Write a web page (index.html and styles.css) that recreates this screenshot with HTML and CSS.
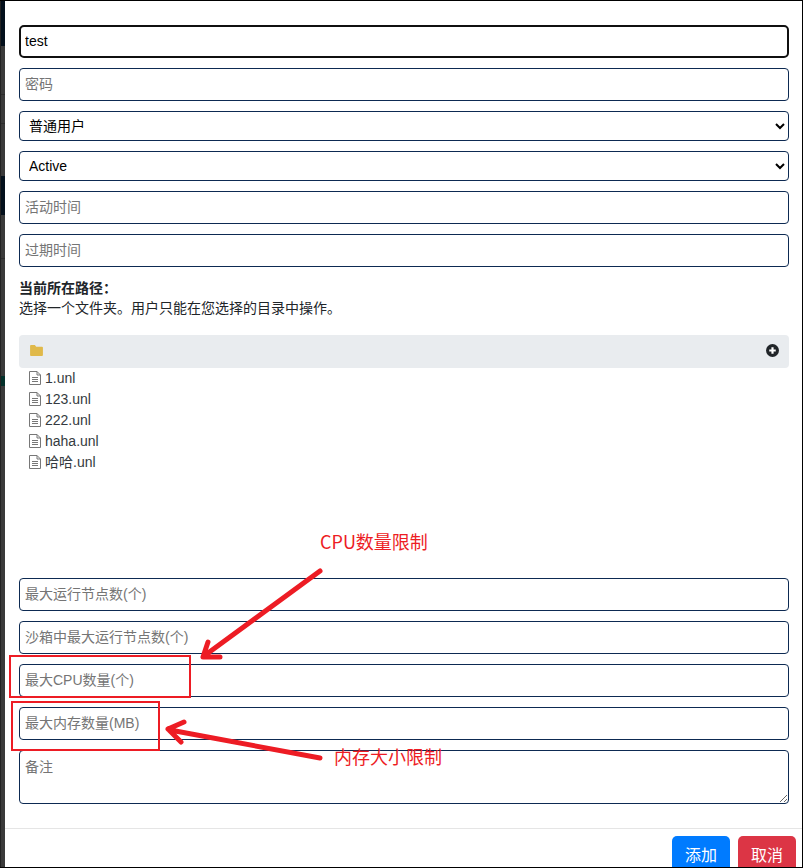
FILE: index.html
```html
<!DOCTYPE html>
<html lang="zh">
<head>
<meta charset="utf-8">
<title>用户</title>
<link rel="stylesheet" href="styles.css">
</head>
<body>
<div class="page">
  <div class="strip"></div>
  <div class="modal">
    <form class="form">
      <div class="group"><input class="field focus" type="text" value="test"></div>
      <div class="group"><input class="field" type="text" placeholder="密码"></div>
      <div class="group"><select class="field select"><option>普通用户</option></select></div>
      <div class="group"><select class="field select"><option>Active</option></select></div>
      <div class="group"><input class="field" type="text" placeholder="活动时间"></div>
      <div class="group"><input class="field" type="text" placeholder="过期时间"></div>
      <div class="path">
        <strong>当前所在路径：</strong>
        <div>选择一个文件夹。用户只能在您选择的目录中操作。</div>
      </div>
      <div class="tree-head">
        <svg class="folder" viewBox="0 0 14 12"><path d="M1 0h4.200l1.500 1.800H13a1 1 0 0 1 1 1V11a1 1 0 0 1-1 1H1a1 1 0 0 1-1-1V1a1 1 0 0 1 1-1z"/></svg>
        <svg class="plus" viewBox="0 0 12 12"><circle cx="6" cy="6" r="6"/><path d="M6 3v6M3 6h6"/></svg>
      </div>
      <ul class="files">
        <li><svg class="file" viewBox="0 0 12 14"><path d="M.5.5h7.500l3.500 3.500v9.500h-11zM8 .5v3.500h3.500M3 6.500h6M3 8.500h6M3 10.500h6"/></svg><span>1.unl</span></li>
        <li><svg class="file" viewBox="0 0 12 14"><path d="M.5.5h7.500l3.500 3.500v9.500h-11zM8 .5v3.500h3.500M3 6.500h6M3 8.500h6M3 10.500h6"/></svg><span>123.unl</span></li>
        <li><svg class="file" viewBox="0 0 12 14"><path d="M.5.5h7.500l3.500 3.500v9.500h-11zM8 .5v3.500h3.500M3 6.500h6M3 8.500h6M3 10.500h6"/></svg><span>222.unl</span></li>
        <li><svg class="file" viewBox="0 0 12 14"><path d="M.5.5h7.500l3.500 3.500v9.500h-11zM8 .5v3.500h3.500M3 6.500h6M3 8.500h6M3 10.500h6"/></svg><span>haha.unl</span></li>
        <li><svg class="file" viewBox="0 0 12 14"><path d="M.5.5h7.500l3.500 3.500v9.500h-11zM8 .5v3.500h3.500M3 6.500h6M3 8.500h6M3 10.500h6"/></svg><span>哈哈.unl</span></li>
      </ul>
      <div class="group"><input class="field" type="text" placeholder="最大运行节点数(个)"></div>
      <div class="group"><input class="field" type="text" placeholder="沙箱中最大运行节点数(个)"></div>
      <div class="group"><input class="field" type="text" placeholder="最大CPU数量(个)"></div>
      <div class="group"><input class="field" type="text" placeholder="最大内存数量(MB)"></div>
      <div class="group"><textarea class="field area" placeholder="备注"></textarea></div>
    </form>
    <div class="footer">
      <button class="btn add" type="button">添加</button>
      <button class="btn cancel" type="button">取消</button>
    </div>
  </div>
  <div class="note note-cpu">CPU数量限制</div>
  <div class="note note-mem">内存大小限制</div>
  <div class="box box-cpu"></div>
  <div class="box box-mem"></div>
  <svg class="arrows" viewBox="0 0 803 868">
    <path d="M320 571 L204 656 M203 657 L208 642 M203 657 L220 657"/>
    <path d="M320 758 L170 730 M168 729 L184 722 M168 729 L181 742"/>
  </svg>
</div>
</body>
</html>
```
FILE: styles.css
```css
* { box-sizing: border-box; }
html, body { margin: 0; padding: 0; height: 100%; }
body { font-family: "Liberation Sans", "Noto Sans CJK SC", sans-serif; background: #000; overflow: hidden; }
.page { position: relative; display: flex; width: 803px; height: 868px; padding: 1px 1px 1px 0; overflow: hidden; }
.strip {
  width: 5px; flex: none; border-left: 1px solid #222;
  background: linear-gradient(#04101c 0 45px, #3a3a3a 45px 93px, #2c2c2c 93px 94px, #3a3a3a 94px 122px, #2c2c2c 122px 123px, #3a3a3a 123px 175px, #04101c 175px 214px, #3a3a3a 214px 257px, #2c2c2c 257px 258px, #3a3a3a 258px 375px, #03302a 375px 385px, #3a3a3a 385px);
}
.modal { flex: 1; min-width: 0; background: #fff; display: flex; flex-direction: column; color: #212529; }
.form { padding: 24px 13px 0 14px; height: 827px; flex: none; }
.group { margin-bottom: 10px; }
.field { display: block; width: 100%; height: 33px; border: 1px solid #0d2a52; border-radius: 4px; background: #fff; padding: 0 5px 2px; font: 14px "Liberation Sans", "Noto Sans CJK SC", sans-serif; color: #000; outline: none; }
.field::placeholder { color: #757575; opacity: 1; }
.focus { border: 2px solid #101010; border-radius: 5px; padding: 0 4px 2px; }
.select { height: 30px; padding: 0 0 0 5px; }
.area { height: 54px; padding-top: 5px; resize: vertical; }
.path { font-size: 14px; line-height: 20px; color: #212529; margin-top: 11px; height: 57px; }
.path strong { display: block; font-weight: 700; }
.tree-head { display: flex; align-items: center; justify-content: space-between; height: 33px; background: #e9ecef; border-radius: 4px; padding: 0 10px 2px 11px; }
.folder { width: 13px; height: 11px; fill: #e0b94a; }
.plus { width: 13px; height: 13px; }
.plus circle { fill: #212529; }
.plus path { stroke: #fff; stroke-width: 2; fill: none; }
.files { list-style: none; margin: 0; padding: 0 0 0 10px; height: 210px; font-size: 14px; color: #343a40; }
.files li { display: flex; align-items: center; gap: 4px; height: 21px; padding-bottom: 2px; line-height: 16px; }
.file { width: 12px; height: 14px; fill: none; stroke: #777; stroke-width: 1; flex: none; }
.footer { flex: 1; border-top: 1px solid #e5e5e5; display: flex; justify-content: flex-end; gap: 8px; padding: 7px 6px 0 0; overflow: hidden; }
.btn { width: 58px; height: 40px; border: 0; border-radius: 5px; font: 16px "Liberation Sans", "Noto Sans CJK SC", sans-serif; color: #fff; padding: 0 0 4px; flex: none; }
.add { background: #007bff; }
.cancel { background: #dc3545; }
.note { position: absolute; color: #ed1c24; font: 18px/24px "Noto Sans CJK SC", sans-serif; }
.note-cpu { left: 320px; top: 529px; }
.note-mem { left: 334px; top: 744px; }
.box { position: absolute; border: 2px solid #ed1c24; }
.box-cpu { left: 9px; top: 655px; width: 182px; height: 43px; }
.box-mem { left: 11px; top: 701px; width: 149px; height: 50px; }
.arrows { position: absolute; left: 0; top: 0; width: 803px; height: 868px; pointer-events: none; }
.arrows path { fill: none; stroke: #ed1c24; stroke-width: 5; stroke-linecap: round; }
```
